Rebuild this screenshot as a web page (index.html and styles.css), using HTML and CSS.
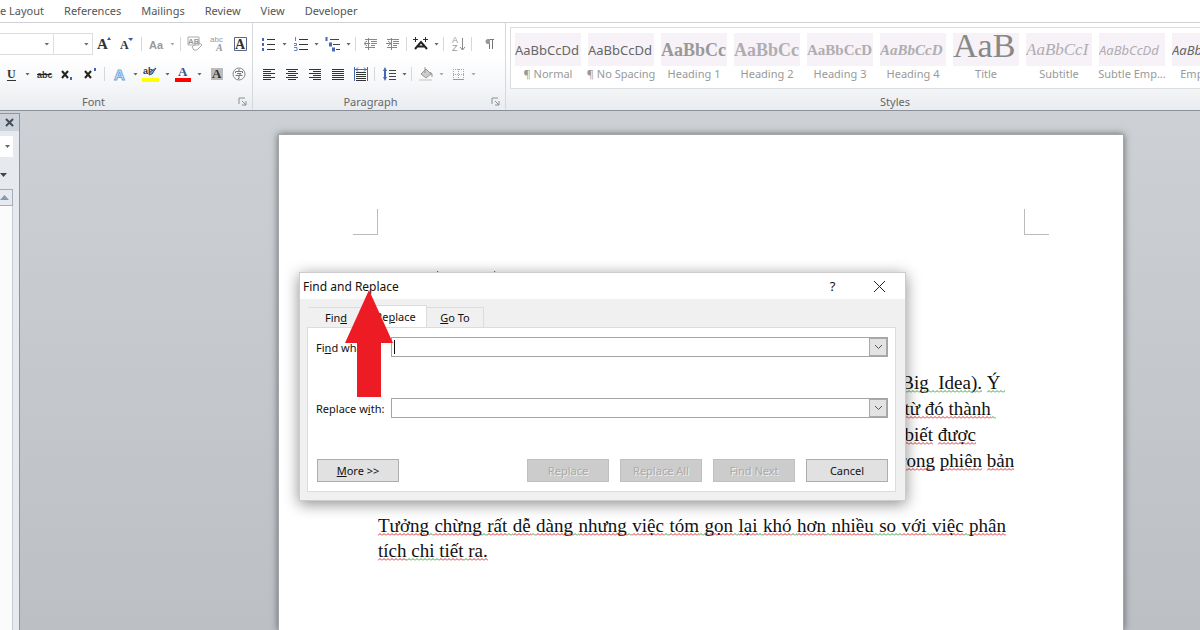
FILE: index.html
```html
<!DOCTYPE html>
<html lang="vi">
<head>
  <meta charset="UTF-8">
  <meta name="viewport" content="width=device-width, initial-scale=1">
  <title>Find and Replace</title>
  <link rel="stylesheet" href="styles.css">
</head>

<body>
  <!-- Ribbon tabs -->
  <nav class="tabs">
    <a href="#layout">e Layout</a>
    <a href="#references">References</a>
    <a href="#mailings">Mailings</a>
    <a href="#review">Review</a>
    <a href="#view">View</a>
    <a href="#developer">Developer</a>
  </nav>

  <!-- Ribbon -->
  <div class="ribbon">
    <section class="group font-group">
      <div class="tool-row">
        <button class="combo combo-font" aria-label="Font name"><i class="caret"></i></button>
        <button class="combo combo-size" aria-label="Font size"><i class="caret"></i></button>
        <button class="tool" aria-label="Grow font"><svg width="18" height="18"><text x="2" y="14" class="serif" font-size="15">A</text><path d="M12 5l2-3 2 3z" fill="#3a56a0"/></svg></button>
        <button class="tool" aria-label="Shrink font"><svg width="18" height="18"><text x="2" y="14" class="serif" font-size="12">A</text><path d="M10 3h5l-2 3z" fill="#3a56a0"/></svg></button>
        <span class="sep"></span>
        <button class="tool split off" aria-label="Change case"><svg width="18" height="18"><text x="2" y="14" class="sans" font-size="11">Aa</text></svg><i class="caret"></i></button>
        <span class="sep"></span>
        <button class="tool off" aria-label="Clear formatting"><svg width="18" height="18"><text x="2" y="9" class="sans" font-size="8">AB</text><path d="M2 2h11v8H2zM6 12l6-5 4 3-5 5H8z" fill="none" stroke="#aaa"/></svg></button>
        <button class="tool off" aria-label="Phonetic guide"><svg width="18" height="18"><text x="1" y="7" class="thin" font-size="8">abc</text><text x="7" y="16" class="serif italic" font-size="10">A</text></svg></button>
        <button class="tool" aria-label="Character border"><svg width="18" height="18"><path d="M2.500 2.500h12v13h-12z" fill="#fff" stroke="#56678a"/><text x="3" y="14" class="serif" font-size="14">A</text></svg></button>
      </div>
      <div class="tool-row">
        <button class="tool split" aria-label="Underline"><svg width="18" height="18"><text x="5" y="13" class="serif" font-size="12">U</text><path d="M5 15.500h9" stroke="#333"/></svg><i class="caret"></i></button>
        <button class="tool" aria-label="Strikethrough"><svg width="18" height="18"><text x="2" y="13" class="sans" font-size="9">abc</text><path d="M2 9.500h14" stroke="#222"/></svg></button>
        <button class="tool" aria-label="Subscript"><svg width="18" height="18"><path d="M4 6l6 7M10 6l-6 7" stroke="#222" stroke-width="2"/><path d="M13 12v3" stroke="#4563b5" stroke-width="2"/></svg></button>
        <button class="tool" aria-label="Superscript"><svg width="18" height="18"><path d="M4 6l6 7M10 6l-6 7" stroke="#222" stroke-width="2"/><path d="M14 3v3" stroke="#4563b5" stroke-width="2"/></svg></button>
        <span class="sep"></span>
        <button class="tool split" aria-label="Text effects"><svg width="18" height="18"><text x="4" y="15" class="effect" font-size="15">A</text></svg><i class="caret"></i></button>
        <button class="tool split" aria-label="Highlight"><svg width="18" height="18"><text x="1" y="9" class="sans" font-size="9">ab</text><path d="M14 3l-4 6-3 1 1-3z" fill="#8c9bc4" stroke="#3b4c82"/><path d="M0 13h17v4H0z" fill="#ff0"/></svg><i class="caret"></i></button>
        <button class="tool split" aria-label="Font color"><svg width="18" height="18"><text x="4" y="11" class="serif blue" font-size="13">A</text><path d="M1 13h16v4H1z" fill="#f00"/></svg><i class="caret"></i></button>
        <button class="tool" aria-label="Character shading"><svg width="18" height="18"><path d="M4 3h12v12H4z" fill="#bbb"/><text x="5" y="13" class="serif" font-size="13">A</text></svg></button>
        <button class="tool" aria-label="Enclose character"><svg width="18" height="18"><circle cx="9" cy="9" r="6" fill="none" stroke="#888"/><path d="M9 4v2M5.500 8V6.500h7V8M7 8.500h4l-2 2v3H8M5.500 10.500h7" fill="none" stroke="#777"/></svg></button>
      </div>
      <footer class="group-name"><span>Font</span><button class="launcher" aria-label="Font settings"><svg width="9" height="9"><path d="M1 7V1h6M4 4l4 4M8 4v4H4" fill="none" stroke="#8a8d92"/></svg></button></footer>
    </section>

    <section class="group paragraph-group">
      <div class="tool-row">
        <button class="tool split" aria-label="Bullets"><svg width="18" height="18"><path d="M8 4.500h8M8 9.500h8M8 14.500h8" stroke="#333"/><path d="M3 3h2v3H3zM3 8h2v3H3zM3 13h2v3H3z" fill="#4668b4"/></svg><i class="caret"></i></button>
        <button class="tool split" aria-label="Numbering"><svg width="18" height="18"><path d="M8 4.500h9M8 9.500h9M8 14.500h9" stroke="#333"/><path d="M4.500 2v4M3 8.500h2.500v2H3M3 12.500h3v3H3" fill="none" stroke="#5f86bd"/></svg><i class="caret"></i></button>
        <button class="tool split" aria-label="Multilevel list"><svg width="18" height="18"><path d="M7 4.500h9M10 9.500h7M13 14.500h4" stroke="#444"/><path d="M3.500 2v4M6 8.500h2v2H6M9 13.500h2v2H9" fill="none" stroke="#4668b4" stroke-width="2"/></svg><i class="caret"></i></button>
        <span class="sep"></span>
        <button class="tool off" aria-label="Decrease indent"><svg width="18" height="18"><path d="M4 4.500h12M10 6.500h6M10 8.500h6M10 10.500h4M4 12.500h10M4 8.500h5M6 6L3 8.500 6 11M7.500 3v12" fill="none" stroke="#888"/></svg></button>
        <button class="tool off" aria-label="Increase indent"><svg width="18" height="18"><path d="M3 4.500h12M9 6.500h6M9 8.500h6M9 10.500h4M3 12.500h10M2 8.500h5M4 6l3 2.500L4 11M7.500 3v12" fill="none" stroke="#888"/></svg></button>
        <span class="sep"></span>
        <button class="tool split" aria-label="Asian layout"><svg width="18" height="18"><path d="M4 14l6-7 6 7M7 11.500h6" fill="none" stroke="#222" stroke-width="2"/><path d="M2 4.500h5M12 4.500h5M4.500 2v5M14.500 2v5" stroke="#22228c"/></svg><i class="caret"></i></button>
        <span class="sep"></span>
        <button class="tool off" aria-label="Sort"><svg width="18" height="18"><text x="3" y="8" class="thin" font-size="9">A</text><text x="3" y="16" class="thin" font-size="9">Z</text><path d="M13.500 3v12M11 12l2.500 3 2.500-3" fill="none" stroke="#888"/></svg></button>
        <span class="sep"></span>
        <button class="tool off" aria-label="Show marks"><svg width="18" height="18"><path d="M12.500 14V4.500M15.500 14V4.500M17 4.500h-5" fill="none" stroke="#777"/><path d="M13 4h-2a2.500 2.500 0 0 0 0 5h2z" fill="#999"/></svg></button>
      </div>
      <div class="tool-row">
        <button class="tool" aria-label="Align left"><svg width="18" height="18"><path d="M3 4.500h12M3 6.500h8M3 8.500h12M3 10.500h8M3 12.500h12M3 14.500h8" stroke="#333"/></svg></button>
        <button class="tool" aria-label="Center"><svg width="18" height="18"><path d="M3 4.500h12M5 6.500h8M3 8.500h12M5 10.500h8M3 12.500h12M5 14.500h8" stroke="#333"/></svg></button>
        <button class="tool" aria-label="Align right"><svg width="18" height="18"><path d="M3 4.500h12M7 6.500h8M3 8.500h12M7 10.500h8M3 12.500h12M7 14.500h8" stroke="#333"/></svg></button>
        <button class="tool" aria-label="Justify"><svg width="18" height="18"><path d="M3 4.500h12M3 6.500h12M3 8.500h12M3 10.500h12M3 12.500h12M3 14.500h12" stroke="#333"/></svg></button>
        <button class="tool" aria-label="Distributed"><svg width="18" height="18"><path d="M4 7.500h10M4 9.500h10M4 11.500h10M4 13.500h10M4 15.500h10" stroke="#333"/><path d="M2.500 2v14M15.500 2v14M3 4.500h12M6 2.500l-2 2 2 2M12 2.500l2 2-2 2" fill="none" stroke="#4668b4"/></svg></button>
        <span class="sep"></span>
        <button class="tool split" aria-label="Line spacing"><svg width="18" height="18"><path d="M10 5.500h7M10 8.500h7M10 11.500h7M10 14.500h7" stroke="#444"/><path d="M6 2l2 4H7v6h1l-2 4-2-4h1V6H4z" fill="#4668b4"/></svg><i class="caret"></i></button>
        <span class="sep"></span>
        <button class="tool split off" aria-label="Shading"><svg width="18" height="18"><path d="M5 9l5-5 5 5-5 4zM9 2v6M14 7q3 1 2 5" fill="#ccc" stroke="#999"/><path d="M3 14h13v2H3z" fill="#ddd"/></svg><i class="caret"></i></button>
        <button class="tool split off" aria-label="Borders"><svg width="18" height="18"><path d="M5.500 4v11M10.500 4v11M15.500 4v11M5 4.500h11M5 9.500h11" stroke="#aaa" stroke-dasharray="1 1"/><path d="M5 14.500h11" stroke="#999"/></svg><i class="caret"></i></button>
      </div>
      <footer class="group-name"><span>Paragraph</span><button class="launcher" aria-label="Paragraph settings"><svg width="9" height="9"><path d="M1 7V1h6M4 4l4 4M8 4v4H4" fill="none" stroke="#8a8d92"/></svg></button></footer>
    </section>

    <section class="group styles-group">
      <div class="gallery">
        <button class="style"><span class="sample dark">AaBbCcDd</span>¶ Normal</button>
        <button class="style"><span class="sample dark">AaBbCcDd</span>¶ No Spacing</button>
        <button class="style"><span class="sample heading first">AaBbCc</span>Heading 1</button>
        <button class="style"><span class="sample heading">AaBbCc</span>Heading 2</button>
        <button class="style"><span class="sample heading small">AaBbCcD</span>Heading 3</button>
        <button class="style"><span class="sample heading small italic">AaBbCcD</span>Heading 4</button>
        <button class="style"><span class="sample title">AaB</span>Title</button>
        <button class="style"><span class="sample subtitle">AaBbCcI</span>Subtitle</button>
        <button class="style"><span class="sample italic">AaBbCcDd</span>Subtle Emp...</button>
        <button class="style"><span class="sample dark italic">AaBbCcDd</span>Emphasis</button>
      </div>
      <footer class="group-name"><span>Styles</span></footer>
    </section>
  </div>

  <!-- Work area -->
  <main class="workspace">
    <aside class="side-pane">
      <header class="pane-head"><button aria-label="Close pane"><svg width="9" height="9"><path d="M1 1l7 7M8 1L1 8" stroke="#444b55" stroke-width="2"/></svg></button></header>
      <div class="pane-search"><i class="caret"></i></div>
      <div class="pane-menu"><svg width="8" height="5"><path d="M0 0h7L3.500 4z" fill="#444"/></svg></div>
      <button class="pane-up" aria-label="Scroll up"><svg width="9" height="6"><path d="M0 5h9L4.500 0z" fill="#7f9bb8"/></svg></button>
      <div class="pane-track"></div>
    </aside>

    <article class="page">
      <div class="crops"><i class="crop left"></i><i class="crop right"></i></div>
      <svg class="accents" width="200" height="6"><path d="M0 4l2-3M57 4l2-3M137 3h3M186 3h4" stroke="#555"/></svg>
      <p class="tail">
        <span class="green">(Big&nbsp;&nbsp;Idea).</span> <span class="green">Ý&nbsp;</span><br>
        &nbsp; <span class="red">từ đó thành</span><span class="green">&nbsp;</span><br>
        &nbsp; <span class="red">biết</span> <span class="red">được</span><br>
        <span class="red">trong</span> <span class="red">phiên</span> <span class="red">bản</span>
      </p>
      <p class="body-text">
        <span class="line"><span class="red">Tưởng</span><span class="green"> </span><span class="red">chừng</span><span class="green"> </span><span class="red">rất</span><span class="green"> </span><span class="red">dễ</span><span class="green"> </span><span class="red">dàng</span><span class="green"> </span><span class="red">nhưng</span><span class="green"> </span><span class="red">việc</span><span class="green"> </span><span class="red">tóm</span><span class="green"> </span><span class="red">gọn</span><span class="green"> </span><span class="red">lại</span><span class="green"> </span><span class="red">khó</span><span class="green"> </span><span class="red">hơn</span><span class="green"> </span><span class="red">nhiều</span><span class="green"> so </span><span class="red">với</span><span class="green"> </span><span class="red">việc</span><span class="green"> </span><span class="red">phân</span></span>
        <span class="red">tích</span><span class="green"> chi </span><span class="red">tiết</span><span class="green"> </span><span class="red">ra.</span>
      </p>
    </article>
  </main>

  <!-- Find and Replace dialog -->
  <form class="dialog">
    <header class="dialog-head">
      <h1>Find and Replace</h1>
      <button type="button" aria-label="Help">?</button>
      <button type="button" aria-label="Close"><svg width="11" height="11"><path d="M0 0l11 11M11 0L0 11" stroke="#222"/></svg></button>
    </header>
    <div class="dialog-tabs">
      <button type="button">Fin<u>d</u></button>
      <button type="button" class="active">Re<u>p</u>lace</button>
      <button type="button"><u>G</u>o To</button>
    </div>
    <div class="panel">
      <div class="field">
        <label for="find">Fi<u>n</u>d what:</label>
        <div class="entry"><i class="cursor"></i><input id="find" type="text"><button type="button" aria-label="Find history"><svg width="9" height="6"><path d="M1 1l3.500 3.500L8 1" fill="none" stroke="#555"/></svg></button></div>
      </div>
      <div class="field">
        <label for="replace">Replace w<u>i</u>th:</label>
        <div class="entry"><input id="replace" type="text"><button type="button" aria-label="Replace history"><svg width="9" height="6"><path d="M1 1l3.500 3.500L8 1" fill="none" stroke="#555"/></svg></button></div>
      </div>
      <div class="actions">
        <button type="button" class="more"><u>M</u>ore &gt;&gt;</button>
        <button type="button" disabled>Replace</button>
        <button type="button" disabled>Replace All</button>
        <button type="button" disabled>Find Next</button>
        <button type="button">Cancel</button>
      </div>
    </div>
    <svg class="arrow" width="48" height="107"><path d="M24 0l24 53H36v54H12V53H0z" fill="#ed1c24"/></svg>
  </form>
</body>
</html>
```
FILE: styles.css
```css
* {
  margin: 0;
  padding: 0;
  box-sizing: border-box;
}
body {
  font-family: "Noto Sans", sans-serif;
  font-size: 11px;
  color: #444;
  height: 100vh;
  display: flex;
  flex-direction: column;
  overflow: hidden;
  background: #fff;
}
button, input {
  font: inherit;
  color: inherit;
  border: 0;
  background: none;
}
svg {
  display: block;
  flex: none;
}

/* Tabs */
.tabs {
  display: flex;
  gap: 20px;
  height: 22px;
  line-height: 22px;
}
.tabs a {
  color: #555;
  text-decoration: none;
}

/* Ribbon */
.ribbon {
  display: flex;
  flex: none;
  height: 89px;
  border-top: 1px solid #cfd1d4;
  border-bottom: 1px solid #8b9097;
  background: linear-gradient(#fff 40%, #f6f7f9 70%, #e9ecf0);
}
.group {
  flex: none;
  display: flex;
  flex-direction: column;
  border-right: 1px solid #d5d8dc;
}
.font-group {
  width: 253px;
}
.paragraph-group {
  width: 253px;
}
.tool-row {
  display: flex;
  align-items: center;
  height: 30px;
}
.tool-row:first-child {
  height: 36px;
  padding-top: 6px;
}
.paragraph-group .tool-row {
  padding-left: 4px;
}
.tool {
  width: 23px;
  height: 22px;
  display: flex;
  align-items: center;
  justify-content: center;
}
.split {
  width: 32px;
  justify-content: space-between;
  padding: 0 2px;
}
.caret {
  width: 5px;
  height: 3px;
  background: #666;
  clip-path: polygon(0 0, 100% 0, 50% 100%);
}
.off .caret {
  background: #aaa;
}
.sep {
  width: 1px;
  height: 14px;
  margin: 0 2px;
  background: #d5d7da;
}
.font-group .sep {
  margin: 0 3px;
}
.combo {
  width: 39px;
  height: 22px;
  display: flex;
  align-items: center;
  justify-content: flex-end;
  padding-right: 3px;
  border: 1px solid #dcdee1;
  border-left: 0;
  background: #fff;
}
.combo-font {
  width: 55px;
  padding-right: 4px;
}
.serif {
  font-family: "Liberation Serif", serif;
  font-weight: bold;
  fill: #333;
}
.sans {
  font-family: "Liberation Sans", sans-serif;
  font-weight: bold;
  fill: #333;
}
.thin {
  font-family: "Liberation Sans", sans-serif;
}
.off text {
  fill: #999;
}
.italic {
  font-style: italic;
}
.blue {
  fill: #35558f;
}
.effect {
  font-family: "Liberation Sans", sans-serif;
  font-weight: bold;
  fill: #e6f2fb;
  stroke: #6fa8dc;
}
.group-name {
  margin-top: auto;
  height: 18px;
  padding: 0 3px;
  display: flex;
  align-items: center;
  color: #666;
}
.group-name span {
  flex: 1;
  text-align: center;
}
.font-group .group-name span {
  padding-right: 54px;
}
.paragraph-group .group-name span {
  padding-right: 6px;
}
.launcher {
  width: 11px;
}

/* Style gallery */
.styles-group {
  flex: 1;
  min-width: 0;
  border-right: 0;
}
.styles-group .group-name span {
  padding-left: 84px;
}
.gallery {
  display: flex;
  gap: 7px;
  height: 62px;
  margin: 4px 0 0 4px;
  padding: 5px 0 0 4px;
  border: 1px solid #dcdde0;
  border-right: 0;
  background: #fff;
  overflow: hidden;
}
.style {
  flex: none;
  width: 66px;
  display: flex;
  flex-direction: column;
  align-items: center;
  line-height: 16px;
  color: #999;
  white-space: nowrap;
}
.sample {
  width: 66px;
  height: 33px;
  line-height: 34px;
  overflow: hidden;
  font-size: 13px;
  text-align: left;
  color: #b0adb1;
  background: #f6f2f7;
}
.sample.dark {
  color: #666;
}
.sample.heading {
  font-family: "Liberation Serif", serif;
  font-weight: bold;
  font-size: 18px;
}
.sample.first {
  color: #999;
}
.sample.heading.small {
  font-size: 15px;
}
.sample.title {
  font-family: "Liberation Serif", serif;
  font-size: 34px;
  line-height: 26px;
  color: #888;
}
.sample.subtitle {
  font-family: "Liberation Serif", serif;
  font-style: italic;
  font-size: 17px;
}

/* Work area */
.workspace {
  flex: 1;
  display: flex;
  min-height: 0;
  background: linear-gradient(#cdd1d5, #bcc0c5);
}
.side-pane {
  flex: none;
  width: 20px;
  margin-top: 2px;
  display: flex;
  flex-direction: column;
  border-top: 1px solid #8f959d;
  border-right: 1px solid #8f959d;
  background: #e6e9ed;
}
.pane-head {
  height: 17px;
  display: flex;
  align-items: center;
  padding-left: 5px;
  background: #ccd2da;
}
.pane-search {
  width: 13px;
  height: 21px;
  margin-top: 5px;
  display: flex;
  align-items: center;
  justify-content: flex-end;
  padding-right: 3px;
  background: #fff;
}
.pane-menu {
  height: 32px;
  padding-top: 16px;
}
.pane-up {
  width: 13px;
  height: 17px;
  display: flex;
  align-items: center;
  border: 1px solid #a6adb6;
  border-left: 0;
}
.pane-track {
  flex: 1;
  width: 13px;
  background: #fcfbfc;
  border-right: 1px solid #c8ccd2;
}

/* Page */
.page {
  flex: none;
  width: 846px;
  margin: 23px auto 0 258px;
  background: #fff;
  border: 1px solid #a3a7ab;
  border-bottom: 0;
  box-shadow: 0 0 7px rgba(0, 0, 0, 0.5);
  font-family: "Liberation Serif", serif;
  font-size: 19px;
  line-height: 26px;
  color: #111;
}
.crops {
  display: flex;
  justify-content: space-between;
  padding: 74px 74px 0 74px;
}
.crop {
  width: 25px;
  height: 26px;
  border-bottom: 1px solid #bbb;
}
.crop.left {
  border-right: 1px solid #bbb;
}
.crop.right {
  border-left: 1px solid #bbb;
}
.accents {
  margin: 35px 0 0 157px;
}
.tail {
  margin: 94px 0 0 616px;
  white-space: nowrap;
}
.body-text {
  margin: 39px 117px 0 99px;
  line-height: 25px;
}
.line {
  display: block;
  text-align-last: justify;
  white-space: nowrap;
}
.red, .green {
  background: url("data:image/svg+xml,%3Csvg xmlns='http://www.w3.org/2000/svg' width='4' height='3'%3E%3Cpath d='M0 2.500L2 .5L4 2.500' fill='none' stroke='%23e03030'/%3E%3C/svg%3E") repeat-x left bottom;
}
.green {
  background-image: url("data:image/svg+xml,%3Csvg xmlns='http://www.w3.org/2000/svg' width='4' height='3'%3E%3Cpath d='M0 2.500L2 .5L4 2.500' fill='none' stroke='%2340a040'/%3E%3C/svg%3E");
}

/* Dialog */
.dialog {
  position: absolute;
  top: 272px;
  left: 299px;
  width: 607px;
  background: #f0f0f0;
  border: 1px solid #ccc;
  box-shadow: 0 3px 14px rgba(0, 0, 0, 0.45);
  padding-bottom: 8px;
  color: #111;
}
.dialog-head {
  display: flex;
  align-items: center;
  height: 26px;
  padding: 0 2px 0 3px;
  background: #fff;
}
.dialog-head h1 {
  flex: 1;
  font-size: 12px;
  font-weight: normal;
}
.dialog-head button {
  width: 47px;
  display: flex;
  justify-content: center;
  font-size: 13px;
}
.dialog-tabs {
  display: flex;
  align-items: flex-end;
  height: 28px;
  padding-left: 8px;
}
.dialog-tabs button {
  width: 57px;
  height: 20px;
  border: 1px solid #dcdcdc;
  border-bottom: 0;
  border-left: 0;
}
.dialog-tabs .active {
  width: 62px;
  height: 22px;
  background: #fff;
}
.panel {
  margin: 0 9px 0 7px;
  padding: 9px 7px 9px 8px;
  border: 1px solid #dcdcdc;
  background: #fff;
}
.field {
  display: flex;
  align-items: center;
  margin-bottom: 41px;
}
.field label {
  width: 75px;
}
.entry {
  flex: 1;
  display: flex;
  height: 20px;
  border: 1px solid #a5a5a5;
  background: #fff;
}
.entry input {
  flex: 1;
  outline: 0;
}
.entry button {
  width: 18px;
  display: flex;
  align-items: center;
  justify-content: center;
  border: 1px solid #aaa;
  background: #e3e3e3;
}
.cursor {
  width: 1px;
  height: 14px;
  margin: 2px;
  background: #111;
}
.actions {
  display: flex;
  gap: 11px;
  padding: 0 0 0 1px;
}
.actions button {
  width: 82px;
  height: 23px;
  border: 1px solid #adadad;
  background: #e1e1e1;
}
.actions .more {
  margin-right: auto;
}
.actions button:disabled {
  border-color: #bfbfbf;
  background: #ccc;
  color: #aaa;
  text-shadow: 1px 1px #eee;
}
.arrow {
  position: absolute;
  top: 17px;
  left: 45px;
}
```
